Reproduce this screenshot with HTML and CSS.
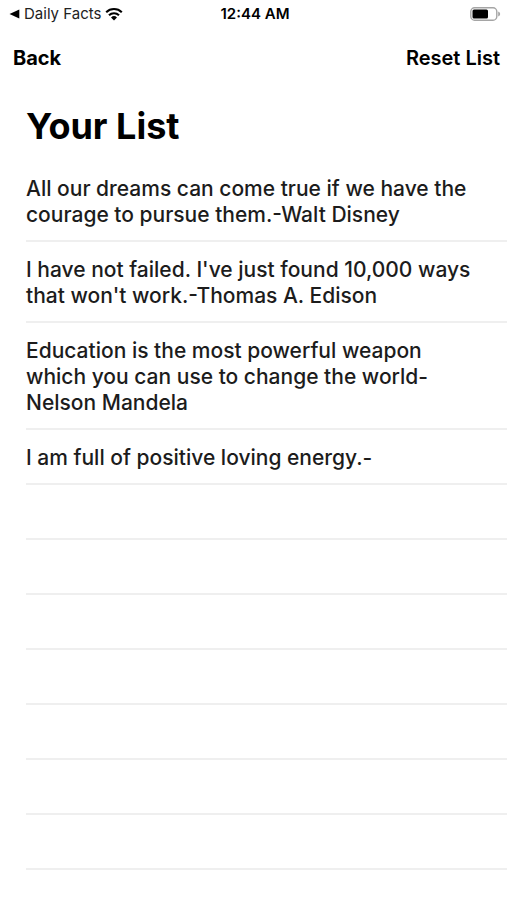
FILE: index.html
```html
<!DOCTYPE html>
<html lang="en">
<head>
    <meta charset="UTF-8">
    <meta name="viewport" content="width=device-width, initial-scale=1.0">
    <title>Your List</title>
    <link rel="stylesheet" href="styles.css">
</head>
<body>
    <!-- Status Bar -->
    <header class="status-bar">
        <a class="return-link" href="#">
            <svg class="return-arrow" viewBox="0 0 11 10" aria-hidden="true"><path d="M10.3 0.6v8.8L0.5 5z"/></svg>
            <span>Daily Facts</span>
            <svg class="wifi" viewBox="0 0 18 14" aria-hidden="true">
                <path d="M1.2 5.2a11.2 11.2 0 0 1 15.6 0M4 8.2a7.2 7.2 0 0 1 10 0" fill="none" stroke="#000" stroke-width="2.1"/>
                <path d="M9 13.5L6 10.4a4.3 4.3 0 0 1 6 0z"/>
            </svg>
        </a>
        <span class="clock">12:44 AM</span>
        <svg class="battery" viewBox="0 0 31 14" aria-hidden="true">
            <rect x="0.8" y="0.8" width="26" height="12.4" rx="3.8" fill="none" stroke="#a5a5a5" stroke-width="1.4"/>
            <rect x="2.5" y="2.5" width="15.5" height="9" rx="1.5"/>
            <path d="M28.2 4.5v5q2-.6 2-2.5t-2-2.5z" fill="#a5a5a5"/>
        </svg>
    </header>

    <!-- Navigation -->
    <nav class="nav-bar">
        <button type="button" class="back-btn">Back</button>
        <button type="button">Reset List</button>
    </nav>

    <main>
        <h1>Your List</h1>
        <ul class="quote-list">
            <li>All our dreams can come true if we have the courage to pursue them.-Walt Disney</li>
            <li>I have not failed. I've just found 10,000 ways that won't work.-Thomas A. Edison</li>
            <li>Education is the most powerful weapon which you can use to change the world-Nelson Mandela</li>
            <li>I am full of positive loving energy.-</li>
            <li></li>
            <li></li>
            <li></li>
            <li></li>
            <li></li>
            <li></li>
            <li></li>
        </ul>
    </main>
</body>
</html>
```
FILE: styles.css
```css
* { box-sizing: border-box; }
body {
    margin: 0;
    font-family: Inter, sans-serif;
    background: #fff;
    color: #000;
}
.status-bar {
    display: grid;
    grid-template-columns: 1fr auto 1fr;
    align-items: center;
    height: 27px;
    padding: 0 6px 0 9px;
    font-size: 15px;
}
.return-link {
    display: flex;
    align-items: center;
    gap: 4px;
    color: #222;
    text-decoration: none;
}
.return-arrow { width: 11px; height: 10px; fill: #000; }
.wifi { width: 18px; height: 14px; fill: #000; }
.clock { font-weight: 600; }
.battery { width: 31px; height: 14px; justify-self: end; }
.nav-bar {
    display: flex;
    justify-content: space-between;
    align-items: center;
    height: 62px;
    padding: 0 7px 0 13px;
}
button {
    padding: 0;
    border: 0;
    background: none;
    font: 600 20px/24px Inter, sans-serif;
    color: #000;
    cursor: pointer;
}
.back-btn { font-weight: 700; }
main { padding-left: 26px; }
h1 {
    margin: 0;
    padding: 13px 0 11px;
    font-size: 36px;
    line-height: 48px;
}
.quote-list {
    margin: 0;
    padding: 0;
    list-style: none;
}
.quote-list li {
    min-height: 55px;
    padding: 15px 26px 12px 0;
    border-bottom: 2px solid #efefef;
    font-size: 21px;
    font-weight: 500;
    line-height: 26px;
    color: #1c1c1c;
}
```
